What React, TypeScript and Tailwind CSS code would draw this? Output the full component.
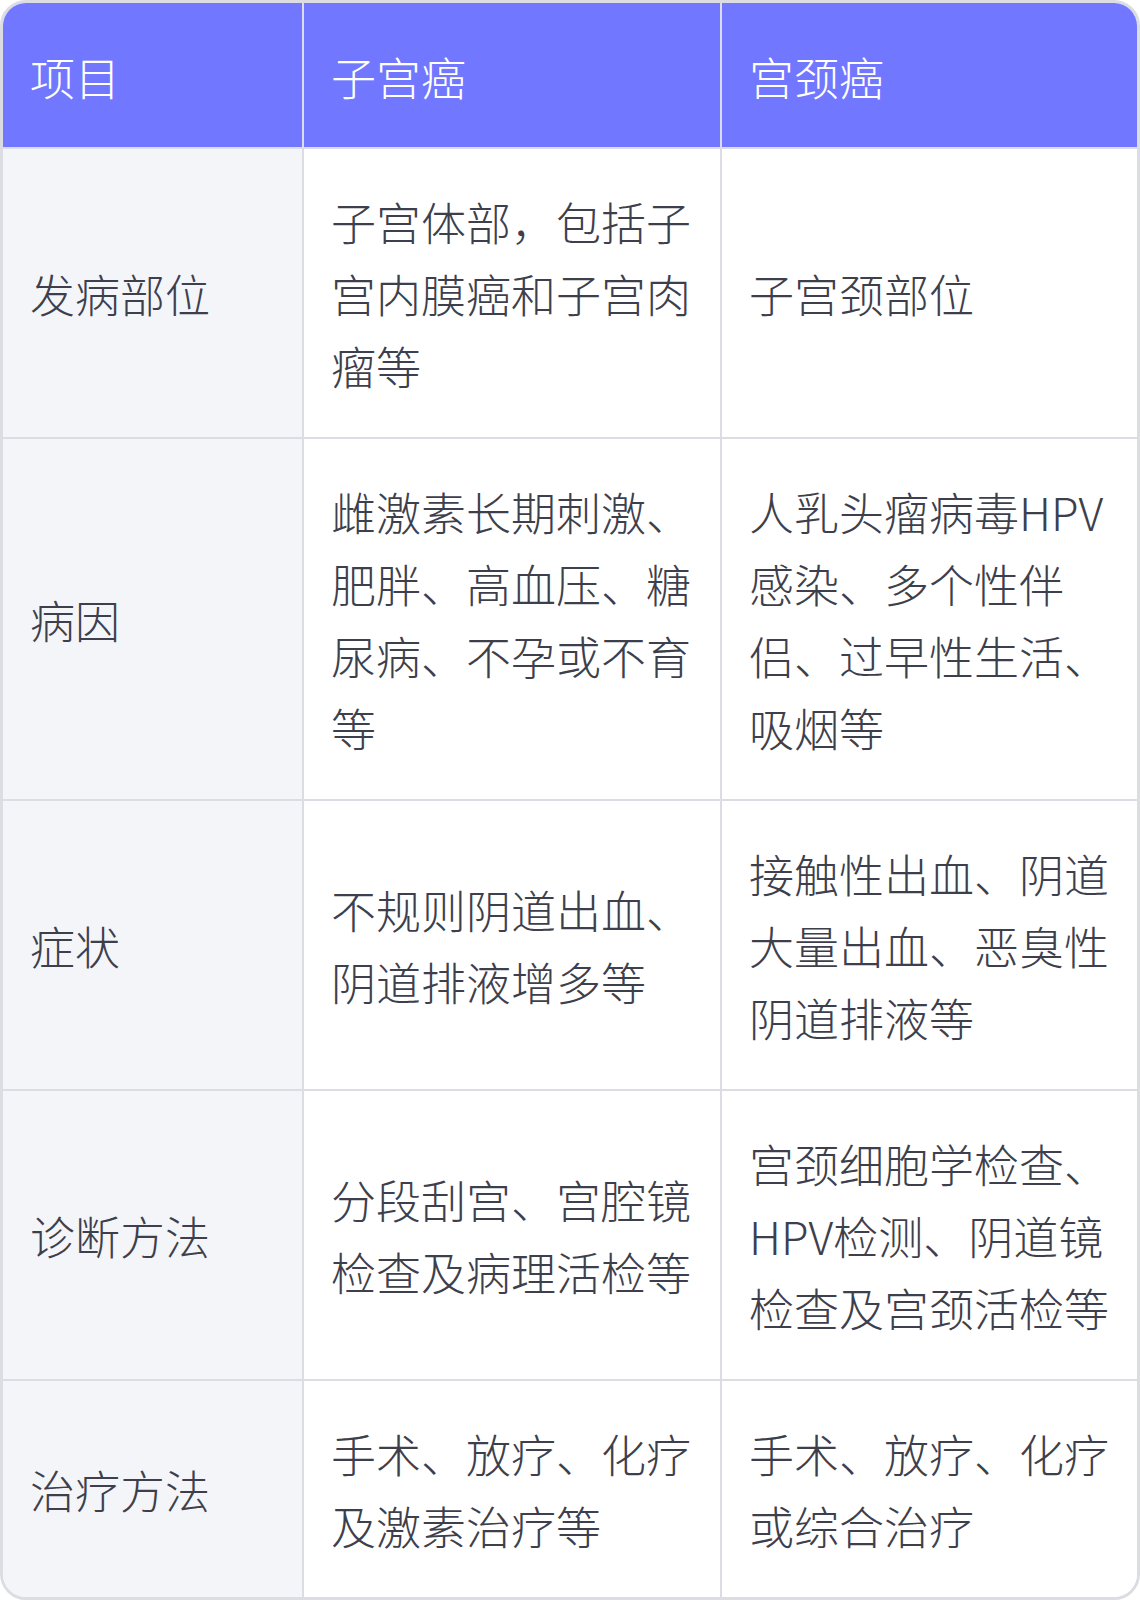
const rows: { item: string; uterine: string; cervical: string }[] = [
  {
    item: "发病部位",
    uterine: "子宫体部，包括子宫内膜癌和子宫肉瘤等",
    cervical: "子宫颈部位",
  },
  {
    item: "病因",
    uterine: "雌激素长期刺激、肥胖、高血压、糖尿病、不孕或不育等",
    cervical: "人乳头瘤病毒HPV感染、多个性伴侣、过早性生活、吸烟等",
  },
  {
    item: "症状",
    uterine: "不规则阴道出血、阴道排液增多等",
    cervical: "接触性出血、阴道大量出血、恶臭性阴道排液等",
  },
  {
    item: "诊断方法",
    uterine: "分段刮宫、宫腔镜检查及病理活检等",
    cervical: "宫颈细胞学检查、HPV检测、阴道镜检查及宫颈活检等",
  },
  {
    item: "治疗方法",
    uterine: "手术、放疗、化疗及激素治疗等",
    cervical: "手术、放疗、化疗或综合治疗",
  },
];

export default function App() {
  return (
    <div
      className="w-[1140px] bg-white"
      style={{ fontFamily: '"Noto Sans CJK SC", "Noto Sans", sans-serif' }}
    >
      <div className="overflow-hidden rounded-[26px] border-[3px] border-[#dcdde3]">
        <div className="grid grid-cols-[301px_418px_1fr] text-[45px] font-light leading-[72px]">
          {/* Header */}
          <div className="flex items-center border-b-2 border-r-2 border-[#dcdde3] bg-[#7177ff] px-[27px] pt-[38px] pb-[34px] text-white">
            项目
          </div>
          <div className="flex items-center border-b-2 border-r-2 border-[#dcdde3] bg-[#7177ff] px-[27px] pt-[38px] pb-[34px] text-white">
            子宫癌
          </div>
          <div className="flex items-center border-b-2 border-[#dcdde3] bg-[#7177ff] px-[27px] pt-[38px] pb-[34px] text-white">
            宫颈癌
          </div>

          {rows.map((r, i) => {
            const last = i === rows.length - 1;
            return [
              <div
                key={r.item + "-a"}
                className={`flex items-center border-r-2 border-[#dcdde3] bg-[#f4f5f9] px-[27px] pt-[37px] pb-[35px] text-[#3d404c] ${last ? "" : "border-b-2"}`}
              >
                {r.item}
              </div>,
              <div
                key={r.item + "-b"}
                className={`flex items-center border-r-2 border-[#dcdde3] bg-white px-[27px] pt-[37px] pb-[35px] text-[#3d404c] ${last ? "" : "border-b-2"}`}
              >
                {r.uterine}
              </div>,
              <div
                key={r.item + "-c"}
                className={`flex items-center border-[#dcdde3] bg-white px-[27px] pt-[37px] pb-[35px] text-[#3d404c] ${last ? "" : "border-b-2"}`}
              >
                {r.cervical}
              </div>,
            ];
          })}
        </div>
      </div>
    </div>
  );
}
